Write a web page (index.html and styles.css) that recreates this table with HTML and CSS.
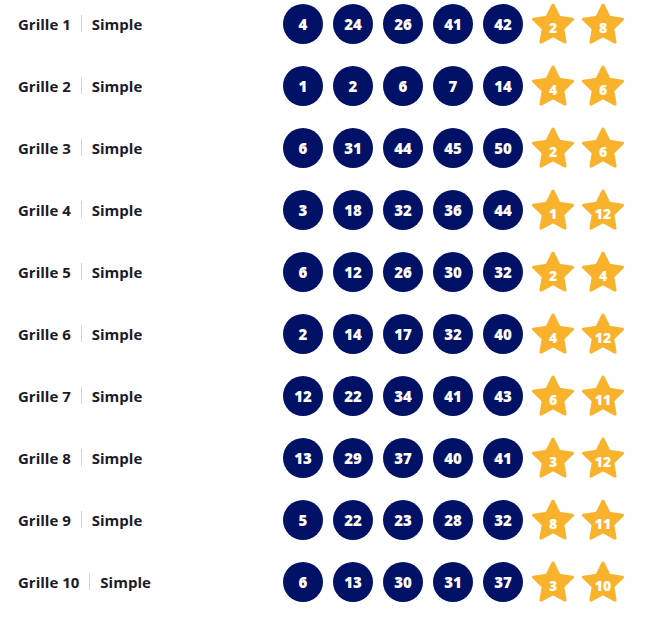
FILE: index.html
```html
<!DOCTYPE html>
<html lang="fr">
<head>
<meta charset="utf-8">
<title>Grilles</title>
<link rel="stylesheet" href="styles.css">
</head>
<body>
<svg width="0" height="0" class="defs">
  <defs>
    <symbol id="star" viewBox="0 0 44 42">
      <polygon points="22,2 28.02,14.21 41.5,16.17 31.75,25.67 34.05,39.08 22,32.75 9.95,39.08 12.25,25.67 2.5,16.17 15.98,14.21" fill="#f8b22c" stroke="#f8b22c" stroke-width="3" stroke-linejoin="round"/>
    </symbol>
  </defs>
</svg>
<div class="list" id="list"></div>
<script src="app.js"></script>
</body>
</html>
```
FILE: app.js
```js
const data = [
  [[4,24,26,41,42],[2,8]],
  [[1,2,6,7,14],[4,6]],
  [[6,31,44,45,50],[2,6]],
  [[3,18,32,36,44],[1,12]],
  [[6,12,26,30,32],[2,4]],
  [[2,14,17,32,40],[4,12]],
  [[12,22,34,41,43],[6,11]],
  [[13,29,37,40,41],[3,12]],
  [[5,22,23,28,32],[8,11]],
  [[6,13,30,31,37],[3,10]]
];
const list = document.getElementById('list');
data.forEach((g, i) => {
  const row = document.createElement('div');
  row.className = 'row';
  let html = '<div class="label"><span class="name">Grille ' + (i + 1) + '</span><span class="sep"></span><span class="type">Simple</span></div><div class="balls">';
  g[0].forEach(n => { html += '<span class="ball">' + n + '</span>'; });
  html += '</div><div class="stars">';
  g[1].forEach(n => { html += '<span class="star"><svg viewBox="0 0 44 42"><use href="#star"/></svg><span class="snum">' + n + '</span></span>'; });
  html += '</div>';
  row.innerHTML = html;
  list.appendChild(row);
});
```
FILE: styles.css
```css
html, body {
  margin: 0;
  padding: 0;
  background: #ffffff;
}
body {
  font-family: "Open Sans", "Lato", sans-serif;
}
.defs {
  position: absolute;
  width: 0;
  height: 0;
}
.list {
  padding-top: 4px;
  display: flex;
  flex-direction: column;
  gap: 22px;
}
.row {
  display: flex;
  align-items: center;
  height: 40px;
}
.label {
  width: 265px;
  padding-left: 18px;
  display: flex;
  align-items: center;
  font-size: 15px;
  font-weight: 700;
  letter-spacing: 0;
  color: #1b1b2a;
  margin-top: -1px;
}
.sep {
  width: 1px;
  height: 17px;
  background: #d4d4d8;
  margin: 0 10px 0 10px;
}
.balls {
  display: flex;
  gap: 10px;
}
.ball {
  width: 40px;
  height: 40px;
  border-radius: 50%;
  background: #001166;
  color: #ffffff;
  font-size: 15px;
  font-weight: 800;
  display: flex;
  align-items: center;
  justify-content: center;
}
.stars {
  display: flex;
  gap: 6px;
  margin-left: 8px;
}
.star {
  width: 44px;
  height: 42px;
  display: flex;
  align-items: center;
  justify-content: center;
  position: relative;
}
.star svg {
  position: absolute;
  left: 0;
  top: 0;
  width: 44px;
  height: 42px;
}
.snum {
  position: relative;
  color: #ffffff;
  font-size: 14px;
  font-weight: 800;
  margin-top: 6px;
}
```
